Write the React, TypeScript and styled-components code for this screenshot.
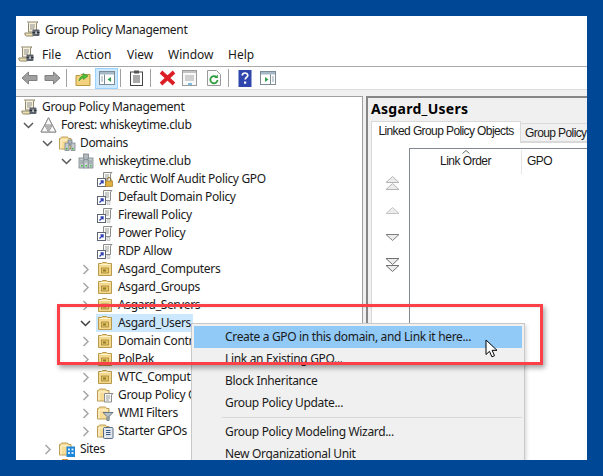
import React from "react";
import styled, { createGlobalStyle } from "styled-components";

const Global = createGlobalStyle`
  html, body { margin: 0; padding: 0; background: #004795; }
  body { width: 603px; height: 476px; overflow: hidden; font-family: "Noto Sans", "Open Sans", sans-serif; font-size: 12px; color: #1a1a1a; }
  svg { display: block; flex: none; }
`;

const Page = styled.div`
  width: 603px; height: 476px; padding: 16px; box-sizing: border-box; position: relative; overflow: hidden;
`;
const Win = styled.div`
  width: 571px; height: 444px; background: #fff; display: flex; flex-direction: column; overflow: hidden; position: relative;
`;
const TitleBar = styled.div`
  height: 28px; flex: none; display: flex; align-items: center; padding: 0 0 2px 8px; gap: 5px; box-sizing: border-box;
`;
const TitleText = styled.span`
  letter-spacing: -0.33px;
`;
const MenuBar = styled.div`
  height: 22px; flex: none; display: flex; align-items: center; padding: 0 0 2px 2px; box-sizing: border-box;
`;
const MenuIconSlot = styled.div`
  width: 24px; flex: none; display: flex;
`;
const MenuItem = styled.span<{ $w: number }>`
  width: ${p => p.$w}px; flex: none;
`;
const ToolBar = styled.div`
  height: 23px; flex: none; border-top: 1px solid #a9a9a9; box-sizing: border-box; display: flex; align-items: center; padding-left: 5px;
`;
const ToolSlot = styled.div<{ $w: number; $active?: boolean }>`
  width: ${p => p.$w}px; height: 21px; flex: none; display: flex; align-items: center; justify-content: center; box-sizing: border-box;
  ${p => p.$active ? "background:#cce8ff;border:1px solid #99d1ff;" : ""}
`;
const ToolSep = styled.div<{ $l: number; $r: number }>`
  width: 1px; height: 18px; background: #a0a0a0; flex: none; margin: 0 ${p => p.$r}px 0 ${p => p.$l}px;
`;
const Band = styled.div`
  height: 7px; flex: none; background: #f0f0f0; border-top: 1px solid #dcdcdc; box-sizing: border-box;
`;
const Panes = styled.div`
  flex: 1; min-height: 0; display: flex; background: #f0f0f0;
`;
const TreePane = styled.div`
  width: 347px; flex: none; background: #fff; border-top: 1px solid #a0a0a0; border-right: 1px solid #a0a0a0; box-sizing: border-box; overflow: hidden; padding-top: 1px;
`;
const Row = styled.div<{ $indent: number }>`
  height: 18px; display: flex; align-items: center; padding-left: ${p => p.$indent}px; white-space: nowrap; box-sizing: border-box;
`;
const ChevronBox = styled.div`
  width: 19px; flex: none; height: 18px; display: flex; align-items: center;
`;
const IconSlot = styled.div`
  width: 18px; margin-left: -2px; flex: none; display: flex;
`;
const Label = styled.span`
  margin-left: 3px; letter-spacing: -0.33px; line-height: 18px; display: block;
`;
const SelWrap = styled.div`
  display: flex; align-items: center; height: 18px; background: #cce8ff; width: 97px; margin-left: -3px; box-sizing: border-box;
`;
const SelIcon = styled.div`
  width: 18px; flex: none; display: flex; margin-left: 1px;
`;
const RightPane = styled.div`
  flex: 1; margin-left: 3px; min-width: 0; border-top: 2px solid #868686; border-left: 2px solid #868686; box-sizing: border-box; background: #f0f0f0; display: flex; flex-direction: column; overflow: hidden;
`;
const PaneTitle = styled.div`
  height: 23px; flex: none; font-weight: 700; font-size: 14px; padding-left: 3px; line-height: 22px; color: #000; letter-spacing: 0.3px;
`;
const Tabs = styled.div`
  display: flex; align-items: flex-end; height: 21px; flex: none; padding-left: 3px; position: relative;
  font-family: "Liberation Sans", Arial, sans-serif;
`;
const ActiveTab = styled.div`
  width: 150px; height: 22px; flex: none; background: #fff; border: 1px solid #d9d9d9; border-bottom: none; box-sizing: border-box; text-align: center; line-height: 19px; letter-spacing: -0.6px; white-space: nowrap; position: relative; z-index: 1; margin-bottom: -1px;
`;
const IdleTab = styled.div`
  width: 120px; height: 19px; flex: none; background: #f0f0f0; border: 1px solid #d9d9d9; border-left: none; box-sizing: border-box; padding-left: 4px; line-height: 19px; letter-spacing: -0.6px; white-space: nowrap;
`;
const TabBody = styled.div`
  flex: 1; margin-left: 3px; background: #fff; border-left: 1px solid #d9d9d9; border-top: 1px solid #d9d9d9; display: flex; min-height: 0;
`;
const MoveCol = styled.div`
  width: 37px; flex: none; padding: 26px 0 0 4px; display: flex; flex-direction: column; align-items: center; box-sizing: border-box;
`;
const MoveSlot = styled.div`
  height: 27.5px; flex: none; display: flex; align-items: center;
`;
const ListBox = styled.div`
  flex: 1; margin-top: 5px; border-top: 1px solid #828790; border-left: 1px solid #828790; background: #fff; position: relative;
`;
const ListHead = styled.div`
  display: flex; height: 25px; box-sizing: border-box; padding-top: 1px;
  font-family: "Liberation Sans", Arial, sans-serif;
`;
const HeadCell = styled.div<{ $w: number; $center?: boolean }>`
  width: ${p => p.$w}px; flex: none; height: 24px; line-height: 23px; letter-spacing: -0.5px; box-sizing: border-box; border-right: 1px solid #e5e5e5; text-align: ${p => p.$center ? "center" : "left"}; padding-left: ${p => p.$center ? 0 : 5}px; position: relative;
`;
const SortCaret = styled.svg`
  position: absolute; left: 52px; top: 0;
`;
const RedFrame = styled.div`
  position: absolute; left: 57px; top: 304px; width: 486px; height: 61px; box-sizing: border-box; border: 3px solid #fb4047; box-shadow: 2px 3px 5px rgba(0,0,0,.35), inset 1px 1px 2px rgba(0,0,0,.08); z-index: 5; pointer-events: none;
`;
const Menu = styled.div`
  position: absolute; left: 175px; top: 307px; width: 334px; height: 160px; box-sizing: border-box; background: #f0f0f0; border: 1px solid #c8c8c8; padding: 2px; z-index: 3; box-shadow: 2px 2px 3px rgba(0,0,0,.12);
`;
const MenuRow = styled.div<{ $hot?: boolean }>`
  height: 22px; line-height: 22px; padding-left: 31px; background: ${p => p.$hot ? "#91c9f7" : "transparent"}; letter-spacing: -0.33px; white-space: nowrap;
`;
const MenuSep = styled.div`
  height: 1px; background: #d7d7d7; margin: 3px 0 3px 28px;
`;
const Pointer = styled.svg`
  position: absolute; left: 485px; top: 339px; z-index: 6;
`;

const ScrollIcon = () => (
  <svg width="16" height="16" viewBox="0 0 16 16">
    <path d="M3.5 1h10.5q-1.5 .6-1.5 2v8H4.5V2.5Q4.5 1.500 3.500 1z" fill="#f6f0dc" stroke="#8e886c" />
    <path d="M6 4h5M6 6h5M6 8h4" stroke="#8e8e8e" />
    <path d="M.8 12h8.500v3H2.500Q.8 15 .8 12z" fill="#ecdfb0" stroke="#8e886c" />
    <rect x="8.500" y="8.500" width="7" height="6.500" rx="1" fill="#5b626c" />
    <rect x="8.500" y="11" width="7" height="1" fill="#2c3138" />
    <rect x="11.300" y="10.500" width="1.500" height="2.500" fill="#dcdcdc" />
  </svg>
);
const ForestIcon = () => (
  <svg width="17" height="16" viewBox="0 0 17 16">
    <path d="M8.500 .8 16 15H1z" fill="#efefef" stroke="#8a8a8a" />
    <path d="M8.500 .8 12.200 8H4.800zM4.800 8 8.500 15H1zM12.200 8 16 15H8.500z" fill="#fafafa" stroke="#8a8a8a" />
    <path d="M4.800 8h7.400L8.500 15z" fill="#b4b4b4" />
  </svg>
);
const FolderBase = () => (
  <g>
    <path d="M.5 14V3.500h1l1-1.500h6l1 1.500H12V14z" fill="#f7dd98" stroke="#bb9c52" />
    <path d="M2 13.500V5h9" fill="none" stroke="#fff6da" />
  </g>
);
const DomainsIcon = () => (
  <svg width="17" height="16" viewBox="0 0 17 16">
    <FolderBase />
    <rect x="9" y="5" width="4" height="5" fill="#aeb6bb" stroke="#6f7b82" strokeWidth=".7" />
    <rect x="6" y="8" width="4" height="7.500" fill="#c3cacf" stroke="#6f7b82" strokeWidth=".7" />
    <rect x="12" y="8" width="4" height="7.500" fill="#c3cacf" stroke="#6f7b82" strokeWidth=".7" />
    <rect x="7" y="13" width="1.500" height="1.500" fill="#3fb53f" />
    <rect x="13" y="13" width="1.500" height="1.500" fill="#3fb53f" />
  </svg>
);
const DomainIcon = () => (
  <svg width="16" height="16" viewBox="0 0 16 16">
    <rect x="5.500" y="1" width="5" height="6" fill="#b2babf" stroke="#78848a" strokeWidth=".8" />
    <rect x="1" y="5" width="5" height="10" fill="#c4cbcf" stroke="#78848a" strokeWidth=".8" />
    <rect x="10" y="5" width="5" height="10" fill="#c4cbcf" stroke="#78848a" strokeWidth=".8" />
    <rect x="6" y="7" width="4" height="8" fill="#d7dcdf" stroke="#78848a" strokeWidth=".8" />
    <path d="M2 8h3M2 10h3M11 8h3M11 10h3M7 9h2" stroke="#7f8a90" strokeWidth=".8" />
    <rect x="3" y="12" width="1.500" height="1.500" fill="#41c041" />
    <rect x="7.500" y="12" width="1.500" height="1.500" fill="#41c041" />
    <rect x="12" y="12" width="1.500" height="1.500" fill="#41c041" />
  </svg>
);
const GpoIcon = ({ lock }: { lock?: boolean }) => (
  <svg width="16" height="16" viewBox="0 0 16 16">
    <path d="M6.500 1.500h8.500l-1.500 1.500v8.500h-7z" fill="#f8f8f4" stroke="#8c8c8c" />
    <path d="M8 4h4M8 6h4M8 8h4" stroke="#a0a0a0" />
    <rect x="0.500" y="7.500" width="8" height="8" fill="#fff" stroke="#5f6675" />
    <path d="M2.500 13.500 6 10M3.500 10H6v2.500" fill="none" stroke="#2a3fb0" strokeWidth="1.400" />
    {lock ? (
      <g>
        <path d="M10 10V8.500a2 2 0 0 1 4 0V10" fill="none" stroke="#8a6a1e" />
        <rect x="8.500" y="10" width="7" height="5.500" fill="#e0b040" stroke="#a07a20" strokeWidth=".7" />
      </g>
    ) : (
      <path d="M10 12.500h3v3h-3z" fill="#e8e8e8" stroke="#b0b0b0" strokeWidth=".6" />
    )}
  </svg>
);
const OuIcon = () => (
  <svg width="16" height="16" viewBox="-1 0 16 16">
    <path d="M.5 2.500h3l1-1h4l1 1h4v12H.5z" fill="#f4d88e" stroke="#b89a4c" />
    <path d="M1.500 3.500h11" stroke="#fff3d0" />
    <rect x="3.500" y="7" width="7" height="5" fill="#e6c25e" stroke="#a38638" strokeWidth=".8" />
    <rect x="5" y="8.500" width="3" height="2" fill="#8a7a30" />
  </svg>
);
const GpFolderIcon = () => (
  <svg width="17" height="16" viewBox="0 0 17 16">
    <FolderBase />
    <path d="M7.500 6.500h8.500l-1.500 1.500v7H7.500z" fill="#f6f6f2" stroke="#8c8c8c" />
    <path d="M9 9h4M9 11h4M9 13h3" stroke="#a0a0a0" />
  </svg>
);
const WmiIcon = () => (
  <svg width="17" height="16" viewBox="0 0 17 16">
    <FolderBase />
    <path d="M6 7.500h10L12 11.500v4.200h-2v-4.200z" fill="#b7c3cc" stroke="#68767f" />
  </svg>
);
const StarterIcon = () => (
  <svg width="17" height="16" viewBox="0 0 17 16">
    <FolderBase />
    <rect x="6.500" y="4.500" width="9.500" height="11" rx="1" fill="#dfe6ee" stroke="#5a6a80" />
    <path d="M9 7.500h4.500M9 9.500h4.500M9 11.500h4.500" stroke="#3c5a86" />
  </svg>
);
const SitesIcon = () => (
  <svg width="17" height="16" viewBox="0 0 17 16">
    <FolderBase />
    <rect x="7.500" y="5.500" width="8.500" height="10.500" fill="#1c86d8" />
    <path d="M9 7.500h2v2H9zM12.500 7.500h2v2h-2zM9 11h2v2H9zM12.500 11h2v2h-2z" fill="#cfeaff" />
  </svg>
);
const ModelingIcon = () => (
  <svg width="17" height="16" viewBox="0 0 17 16">
    <path d="M3 1h6" stroke="#d9923a" strokeWidth="2" />
  </svg>
);
const Chevron = ({ open, dark }: { open?: boolean; dark?: boolean }) => (
  <svg width="11" height="11" viewBox="0 0 11 11">
    {open ? (
      <path d="M1 3 5.500 7.500 10 3" fill="none" stroke={dark ? "#404040" : "#595959"} strokeWidth="1.500" />
    ) : (
      <path d="M3.500 1 8 5.500 3.500 10" fill="none" stroke="#a6a6a6" strokeWidth="1.500" />
    )}
  </svg>
);

type Node = { depth: number; text: string; icon: React.ReactNode; open?: boolean; chev?: boolean; sel?: boolean };
const nodes: Node[] = [
  { depth: 0, text: "Forest: whiskeytime.club", icon: <ForestIcon />, open: true, chev: true },
  { depth: 1, text: "Domains", icon: <DomainsIcon />, open: true, chev: true },
  { depth: 2, text: "whiskeytime.club", icon: <DomainIcon />, open: true, chev: true },
  { depth: 3, text: "Arctic Wolf Audit Policy GPO", icon: <GpoIcon lock /> },
  { depth: 3, text: "Default Domain Policy", icon: <GpoIcon /> },
  { depth: 3, text: "Firewall Policy", icon: <GpoIcon /> },
  { depth: 3, text: "Power Policy", icon: <GpoIcon /> },
  { depth: 3, text: "RDP Allow", icon: <GpoIcon /> },
  { depth: 3, text: "Asgard_Computers", icon: <OuIcon />, chev: true },
  { depth: 3, text: "Asgard_Groups", icon: <OuIcon />, chev: true },
  { depth: 3, text: "Asgard_Servers", icon: <OuIcon />, chev: true },
  { depth: 3, text: "Asgard_Users", icon: <OuIcon />, chev: true, open: true, sel: true },
  { depth: 3, text: "Domain Controllers", icon: <OuIcon />, chev: true },
  { depth: 3, text: "PolPak", icon: <OuIcon />, chev: true },
  { depth: 3, text: "WTC_Computers", icon: <OuIcon />, chev: true },
  { depth: 3, text: "Group Policy Objects", icon: <GpFolderIcon />, chev: true },
  { depth: 3, text: "WMI Filters", icon: <WmiIcon />, chev: true },
  { depth: 3, text: "Starter GPOs", icon: <StarterIcon />, chev: true },
  { depth: 1, text: "Sites", icon: <SitesIcon />, chev: true },
];

const TreeRow = ({ n }: { n: Node }) => (
  <Row $indent={7 + n.depth * 19}>
    <ChevronBox>{n.chev ? <Chevron open={n.open} dark={n.sel} /> : null}</ChevronBox>
    {n.sel ? (
      <SelWrap><SelIcon>{n.icon}</SelIcon><Label>{n.text}</Label></SelWrap>
    ) : (
      <><IconSlot>{n.icon}</IconSlot><Label>{n.text}</Label></>
    )}
  </Row>
);

const Arrow = ({ dir }: { dir: "l" | "r" }) => (
  <svg width="17" height="14" viewBox="0 0 17 14">
    <path d={dir === "l" ? "M1 7 7.500 1v3.500H16v5H7.500V13z" : "M16 7 9.500 1v3.500H1v5h8.500V13z"} fill="#a0a0a0" stroke="#808080" />
  </svg>
);
const UpFolder = () => (
  <svg width="16" height="16" viewBox="0 0 16 16">
    <path d="M1 5.500h4l1-1h9v11H1z" fill="#f2d27e" stroke="#b8973f" />
    <path d="M4 11q0-4 4-5.500V3.500L13 6 8.500 9.500v-2Q6 8.500 4 11z" fill="#4fbf3a" stroke="#2f8f25" strokeWidth=".6" />
  </svg>
);
const PaneToggle = ({ right }: { right?: boolean }) => (
  <svg width="16" height="14" viewBox="0 0 16 14">
    <rect x=".5" y=".5" width="15" height="13" fill="#fff" stroke="#7e8c98" />
    <rect x="1" y="1" width="14" height="2.500" fill="#a7b8c6" />
    {right ? (
      <>
        <path d="M10.500 3.500v10" stroke="#7e8c98" />
        <path d="M12 6h2M12 8h2M12 10h2" stroke="#8fa3b3" />
        <path d="M5 6v5l3.500-2.500z" fill="#2e9e4f" />
      </>
    ) : (
      <>
        <path d="M5.500 3.500v10" stroke="#7e8c98" />
        <path d="M2 6h2M2 8h2M2 10h2" stroke="#8fa3b3" />
        <path d="M12 6v5L8.500 8.500z" fill="#2e9e4f" />
      </>
    )}
  </svg>
);
const Clipboard = () => (
  <svg width="13" height="16" viewBox="0 0 13 16">
    <rect x=".5" y="2" width="12" height="13.500" fill="#fff" stroke="#444" />
    <rect x="4" y=".5" width="5" height="3" fill="#555" />
    <path d="M3 6h7M3 8h7M3 10h7M3 12h7" stroke="#555" />
  </svg>
);
const RedX = () => (
  <svg width="17" height="16" viewBox="0 0 17 16">
    <path d="M2 2 15 14M15 2 2 14" stroke="#dc1f26" strokeWidth="3.800" />
  </svg>
);
const Props = () => (
  <svg width="15" height="16" viewBox="0 0 15 16">
    <rect x=".5" y=".5" width="14" height="15" fill="#f8f8f8" stroke="#9a9a9a" />
    <rect x="1" y="1" width="13" height="2" fill="#c4c4c4" />
    <path d="M3 6h9M3 8h9M3 10h9" stroke="#a8a8a8" />
    <path d="M6 14h4" stroke="#59a8d8" strokeWidth="1.500" />
  </svg>
);
const Refresh = () => (
  <svg width="14" height="16" viewBox="0 0 14 16">
    <path d="M.5.5h9l4 4v11H.5z" fill="#fbfbfb" stroke="#9a9a9a" />
    <path d="M10.500 10a3.600 3.600 0 1 1-1.200-3" fill="none" stroke="#2f9e3f" strokeWidth="1.800" />
    <path d="M10.800 4.500v3.400H7.400z" fill="#2f9e3f" />
  </svg>
);
const Help = () => (
  <svg width="14" height="17" viewBox="0 0 14 17">
    <rect width="13" height="17" x=".5" fill="#2f46ad" />
    <path d="M4.200 5.500Q4.500 3 7 3t2.800 2.300c0 2-2.600 2.200-2.600 4.200" fill="none" stroke="#fff" strokeWidth="1.700" />
    <rect x="6" y="11.500" width="2.200" height="2.200" fill="#fff" />
  </svg>
);

const Tri = ({ up, c, y = 0 }: { up: boolean; c: string; y?: number }) => (
  <path transform={`translate(0 ${y})`} d={up ? "M7.500 .5 14 6.500H1z" : "M1 .5h13L7.500 6.500z"} fill="#ececec" stroke={c} />
);
const MoveBtn = ({ up, double, c }: { up: boolean; double?: boolean; c: string }) => (
  <svg width="15" height={double ? 14 : 7} viewBox={`0 0 15 ${double ? 14 : 7}`}>
    <Tri up={up} c={c} />
    {double ? <Tri up={up} c={c} y={7} /> : null}
  </svg>
);

export default function App() {
  return (
    <Page>
      <Global />
      <Win>
        <TitleBar><ScrollIcon /><TitleText>Group Policy Management</TitleText></TitleBar>
        <MenuBar>
          <MenuIconSlot><ScrollIcon /></MenuIconSlot>
          <MenuItem $w={34}>File</MenuItem>
          <MenuItem $w={51}>Action</MenuItem>
          <MenuItem $w={41}>View</MenuItem>
          <MenuItem $w={60}>Window</MenuItem>
          <MenuItem $w={40}>Help</MenuItem>
        </MenuBar>
        <ToolBar>
          <ToolSlot $w={17}><Arrow dir="l" /></ToolSlot>
          <ToolSlot $w={6} />
          <ToolSlot $w={17}><Arrow dir="r" /></ToolSlot>
          <ToolSep $l={5} $r={8} />
          <ToolSlot $w={16}><UpFolder /></ToolSlot>
          <ToolSlot $w={4} />
          <ToolSlot $w={23} $active><PaneToggle /></ToolSlot>
          <ToolSep $l={2} $r={9} />
          <ToolSlot $w={13}><Clipboard /></ToolSlot>
          <ToolSep $l={7} $r={8} />
          <ToolSlot $w={17}><RedX /></ToolSlot>
          <ToolSlot $w={6} />
          <ToolSlot $w={15}><Props /></ToolSlot>
          <ToolSlot $w={10} />
          <ToolSlot $w={14}><Refresh /></ToolSlot>
          <ToolSep $l={7} $r={9} />
          <ToolSlot $w={14}><Help /></ToolSlot>
          <ToolSlot $w={8} />
          <ToolSlot $w={16}><PaneToggle right /></ToolSlot>
        </ToolBar>
        <Band />
        <Panes>
          <TreePane>
            <Row $indent={7}><IconSlot><ScrollIcon /></IconSlot><Label>Group Policy Management</Label></Row>
            {nodes.map(n => <TreeRow key={n.text} n={n} />)}
            <Row $indent={26}><ChevronBox /><IconSlot><ModelingIcon /></IconSlot></Row>
          </TreePane>
          <RightPane>
            <PaneTitle>Asgard_Users</PaneTitle>
            <Tabs>
              <ActiveTab>Linked Group Policy Objects</ActiveTab>
              <IdleTab>Group Policy Inheritance</IdleTab>
            </Tabs>
            <TabBody>
              <MoveCol>
                <MoveSlot><MoveBtn up double c="#b4b4b4" /></MoveSlot>
                <MoveSlot><MoveBtn up c="#c4c4c4" /></MoveSlot>
                <MoveSlot><MoveBtn up={false} c="#808080" /></MoveSlot>
                <MoveSlot><MoveBtn up={false} double c="#707070" /></MoveSlot>
              </MoveCol>
              <ListBox>
                <ListHead>
                  <HeadCell $w={112} $center>
                    Link Order
                    <SortCaret width="8" height="4" viewBox="0 0 8 4"><path d="M.5 3.500 4 .5l3.500 3" fill="none" stroke="#6a6a6a" /></SortCaret>
                  </HeadCell>
                  <HeadCell $w={66}>GPO</HeadCell>
                </ListHead>
              </ListBox>
            </TabBody>
          </RightPane>
        </Panes>
        <Menu>
          <MenuRow $hot>Create a GPO in this domain, and Link it here...</MenuRow>
          <MenuRow>Link an Existing GPO...</MenuRow>
          <MenuRow>Block Inheritance</MenuRow>
          <MenuRow>Group Policy Update...</MenuRow>
          <MenuSep />
          <MenuRow>Group Policy Modeling Wizard...</MenuRow>
          <MenuRow>New Organizational Unit</MenuRow>
        </Menu>
      </Win>
      <RedFrame />
      <Pointer width="13" height="20" viewBox="0 0 13 20">
        <path d="M1 1v14.500l3.500-3.200 2.400 5.500 2.600-1.100-2.400-5.400H12z" fill="#fff" stroke="#000" />
      </Pointer>
    </Page>
  );
}
